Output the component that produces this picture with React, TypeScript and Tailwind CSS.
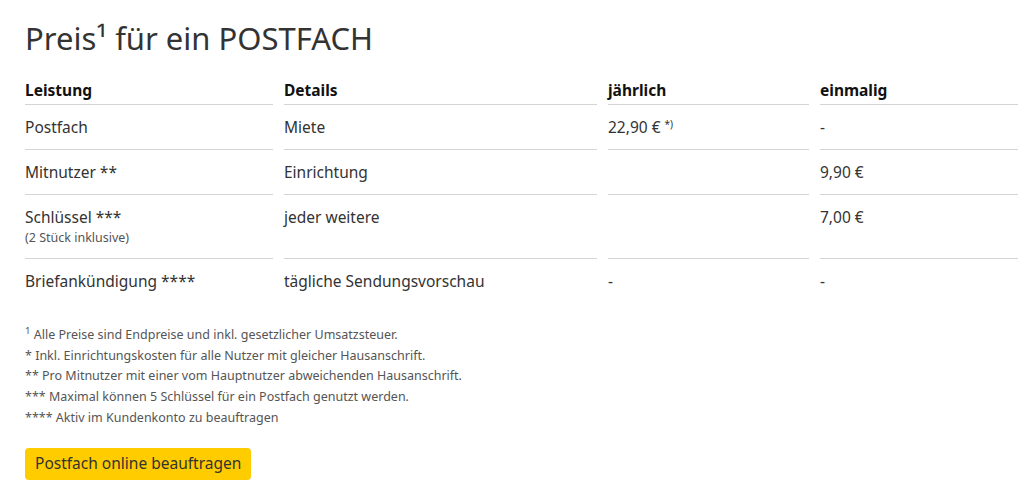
const rows = [
  { leistung: "Postfach", sub: "", details: "Miete", jahr: "22,90 €", star: true, einmal: "-" },
  { leistung: "Mitnutzer **", sub: "", details: "Einrichtung", jahr: "", star: false, einmal: "9,90 €" },
  { leistung: "Schlüssel ***", sub: "(2 Stück inklusive)", details: "jeder weitere", jahr: "", star: false, einmal: "7,00 €" },
  { leistung: "Briefankündigung ****", sub: "", details: "tägliche Sendungsvorschau", jahr: "-", star: false, einmal: "-" },
]

const notes = [
  "* Inkl. Einrichtungskosten für alle Nutzer mit gleicher Hausanschrift.",
  "** Pro Mitnutzer mit einer vom Hauptnutzer abweichenden Hausanschrift.",
  "*** Maximal können 5 Schlüssel für ein Postfach genutzt werden.",
  "**** Aktiv im Kundenkonto zu beauftragen",
]

const App = () => {
  const cell = "pt-[11px] pb-[11px] text-[15.5px] leading-[22px] text-[#333]"
  return (
    <div className="w-[1024px] h-[482px] bg-white px-[25px] pt-[18px] font-['Noto_Sans',sans-serif] text-[#333] overflow-hidden">
      <h1 className="text-[31px] leading-[40px] text-[#333] font-normal">
        Preis¹ für ein POSTFACH
      </h1>

      <div className="grid grid-cols-[248px_313px_201px_198px] gap-x-[11px] mt-[21px]">
        {["Leistung", "Details", "jährlich", "einmalig"].map((h) => (
          <div key={h} className="border-b border-[#d4d4d4] pb-[3px] text-[15.5px] leading-[22px] font-bold text-[#111]">
            {h}
          </div>
        ))}

        {rows.map((r, i) => {
          const b = i < rows.length - 1 ? " border-b border-[#d4d4d4]" : ""
          return (
            <div key={r.leistung} className="contents">
              <div className={cell + b}>
                <div>{r.leistung}</div>
                {r.sub && <div className="mt-[1px] text-[12.5px] leading-[18px] text-[#555]">{r.sub}</div>}
              </div>
              <div className={cell + b}>{r.details}</div>
              <div className={cell + b}>
                {r.jahr}
                {r.star && <sup className="text-[10px] ml-[4px]">*)</sup>}
              </div>
              <div className={cell + b}>{r.einmal}</div>
            </div>
          )
        })}
      </div>

      <div className="mt-[22px] text-[12.5px] leading-[20.7px] text-[#555]">
        <div>
          <sup className="text-[9.5px]">1</sup> Alle Preise sind Endpreise und inkl. gesetzlicher Umsatzsteuer.
        </div>
        {notes.map((n) => (
          <div key={n}>{n}</div>
        ))}
      </div>

      <button className="mt-[19px] h-[32px] px-[10px] rounded-[4px] bg-[#ffcc00] text-[15.5px] text-[#333]">
        Postfach online beauftragen
      </button>
    </div>
  )
}
export default App
